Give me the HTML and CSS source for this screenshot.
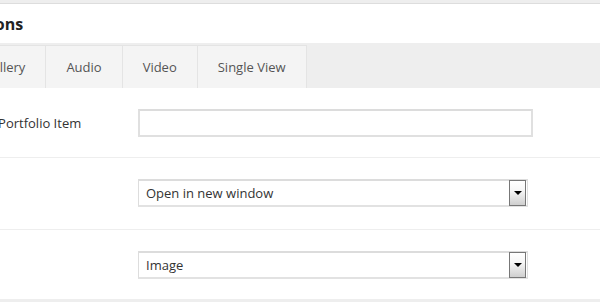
FILE: index.html
```html
<!DOCTYPE html>
<html lang="en">
<head>
    <meta charset="UTF-8">
    <title>Portfolio Options</title>
    <link rel="stylesheet" href="styles.css">
</head>
<body>

    <!-- Meta box -->
    <div class="metabox">
        <h3 class="metabox-title">Portfolio Options</h3>

        <!-- Tabs -->
        <ul class="tabs">
            <li>Gallery</li>
            <li>Audio</li>
            <li>Video</li>
            <li>Single View</li>
        </ul>

        <!-- Fields -->
        <div class="field-row first">
            <label class="field-label">Link to Portfolio Item</label>
            <div class="field">
                <div class="text-input"></div>
            </div>
        </div>

        <div class="field-row">
            <label class="field-label"></label>
            <div class="field">
                <div class="select-box">
                    <span class="select-value">Open in new window</span>
                    <span class="select-arrow"></span>
                </div>
            </div>
        </div>

        <div class="field-row last">
            <label class="field-label"></label>
            <div class="field">
                <div class="select-box">
                    <span class="select-value">Image</span>
                    <span class="select-arrow"></span>
                </div>
            </div>
        </div>
    </div>

</body>
</html>
```

FILE: styles.css
```css
/* Page */
body {
    margin: 0;
    padding: 0;
    background-color: #eeeeee;
    font-family: 'Open Sans', 'Segoe UI', sans-serif;
    font-size: 13px;
    color: #333;
    overflow: hidden;
    height: 302px;
}

.metabox {
    margin: 3px 0 0 -60px;
    width: 700px;
    background: #ffffff;
    border-top: 1px solid #dddddd;
    height: 295px;
}

.metabox-title {
    margin: 0;
    height: 39px;
    line-height: 40px;
    font-size: 16px;
    font-weight: 700;
    color: #222;
    text-indent: -54px;
}

/* Tabs */
.tabs {
    list-style: none;
    margin: 0 0 0 22px;
    padding: 2px 0 0 0;
    height: 43px;
    background-color: #eeeeee;
    display: flex;
}

.tabs li {
    background-color: #f4f4f4;
    border: 1px solid #e4e4e4;
    border-bottom: none;
    margin-right: -1px;
    padding: 0 20px;
    line-height: 43px;
    color: #555;
}

/* Form rows */
.field-row {
    display: grid;
    grid-template-columns: 184px 1fr;
    align-items: center;
    padding-left: 14px;
    padding-bottom: 1px;
    height: 70px;
    border-bottom: 1px solid #eeeeee;
}

.field-row.first {
    height: 69px;
    padding-bottom: 0;
}

.field-row.last {
    height: 69px;
    padding-bottom: 2px;
    border-bottom: none;
}

.field-label {
    color: #333;
}

.text-input {
    width: 391px;
    height: 24px;
    border: 2px solid #e0e0e0;
    border-top-color: #dcdcdc;
}

/* Fake select */
.select-box {
    width: 390px;
    height: 28px;
    border: 1px solid #dddddd;
    border-top: 2px solid #dcdcdc;
    border-bottom: 2px solid #e2e2e2;
    display: flex;
    align-items: center;
    justify-content: space-between;
    box-sizing: border-box;
}

.select-value {
    padding-left: 7px;
    color: #333;
}

.select-arrow {
    width: 15px;
    height: 24px;
    border: 1px solid #777;
    background: linear-gradient(#ffffff 0%, #f6f6f6 40%, #cfcfcf 100%);
    position: relative;
    margin-right: 1px;
}

.select-arrow::after {
    content: "";
    position: absolute;
    left: 4px;
    top: 10px;
    border-left: 4px solid transparent;
    border-right: 4px solid transparent;
    border-top: 4px solid #000;
}
```
